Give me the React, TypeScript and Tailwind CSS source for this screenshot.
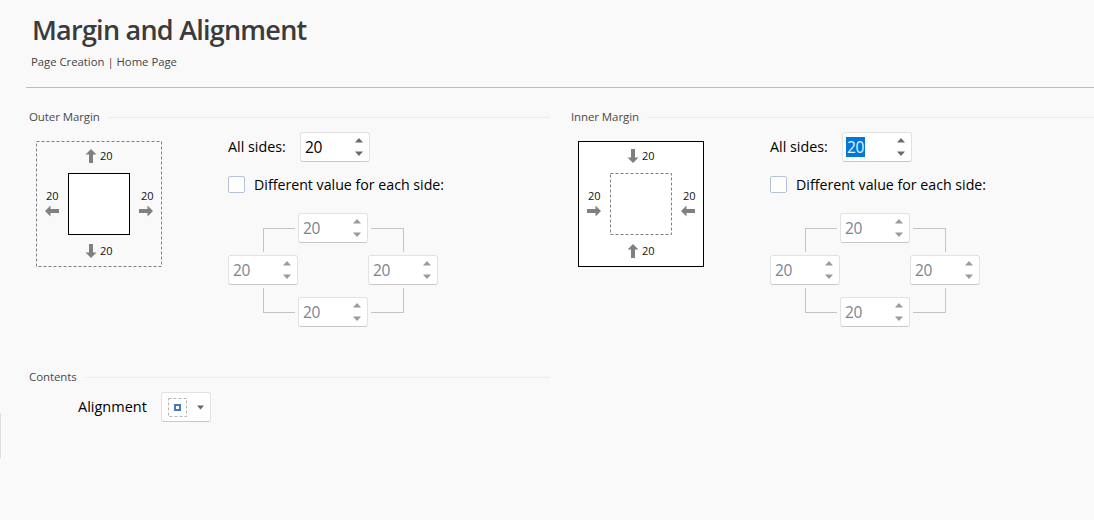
import React from 'react';

const font = { fontFamily: '"Open Sans", sans-serif' };

const Spinner = ({ disabled = false, selected = false }: { disabled?: boolean; selected?: boolean }) => (
  <div
    className={`relative w-[70px] h-[30px] bg-white rounded-[3px] border border-[#e2e2e2] border-b-[#c8c8c8] ${selected ? 'border-b-[#0078a8]' : ''}`}
  >
    <span
      className={`absolute left-[3px] top-[4px] h-[20px] px-[1px] text-[15.5px] leading-[20px] tracking-[-0.3px] ${
        selected ? 'bg-[#0078d7] text-[#e8f2fb]' : disabled ? 'text-[#7a8591]' : 'text-black'
      }`}
    >
      20
    </span>
    <svg className="absolute right-[6px] top-[5px]" width="8" height="18" viewBox="0 0 8 18">
      <path d="M4 0 L8 4.5 H0 Z" fill={disabled ? '#9a9a9a' : '#6a6a6a'} />
      <path d="M4 18 L8 13.5 H0 Z" fill={disabled ? '#9a9a9a' : '#6a6a6a'} />
    </svg>
  </div>
);

const Section = ({ label, className }: { label: string; className: string }) => (
  <div className={`flex items-center h-[20px] pl-[3px] ${className}`}>
    <span className="text-[11.5px] text-[#4a4a4a] tracking-[-0.1px] whitespace-nowrap">{label}</span>
    <div className="flex-1 ml-[8px] border-t border-[#ececec]" />
  </div>
);

const Arrow = ({ x, y, dir }: { x: number; y: number; dir: 'up' | 'down' | 'left' | 'right' }) => {
  const rot = { up: 0, right: 90, down: 180, left: 270 }[dir];
  return (
    <path
      d="M0 -7 L5.5 -1.5 H2 V7 H-2 V-1.5 H-5.5 Z"
      fill="#808080"
      transform={`translate(${x} ${y}) rotate(${rot})`}
    />
  );
};

const Num = ({ x, y }: { x: number; y: number }) => (
  <text x={x} y={y} fontSize="11" fill="#111" fontFamily="Open Sans, sans-serif">
    20
  </text>
);

const Diagram = ({ inner }: { inner?: boolean }) => (
  <svg width="127" height="127" viewBox="0 0 127 127" className="block shrink-0">
    <rect
      x="0.5"
      y="0.5"
      width="125"
      height="125"
      fill={inner ? '#ffffff' : 'none'}
      stroke={inner ? '#000000' : '#808080'}
      strokeDasharray={inner ? undefined : '3 2'}
    />
    <rect
      x="32.5"
      y="32.5"
      width="61"
      height="61"
      fill="#ffffff"
      stroke={inner ? '#808080' : '#000000'}
      strokeDasharray={inner ? '3 2' : undefined}
    />
    <Arrow x={55} y={15} dir={inner ? 'down' : 'up'} />
    <Arrow x={55} y={110} dir={inner ? 'up' : 'down'} />
    <Arrow x={16} y={70} dir={inner ? 'right' : 'left'} />
    <Arrow x={110} y={70} dir={inner ? 'left' : 'right'} />
    <Num x={64} y={19} />
    <Num x={64} y={114} />
    <Num x={10} y={59} />
    <Num x={105} y={59} />
  </svg>
);

const Controls = ({ selected }: { selected?: boolean }) => (
  <div>
    <div className="flex items-center h-[30px]">
      <span className="w-[72px] text-[14.3px] text-black">All sides:</span>
      <Spinner selected={selected} />
    </div>
    <div className="flex items-center h-[17px] mt-[14px]">
      <div className="w-[17px] h-[17px] bg-white rounded-[2px] border border-[#b4c2da]" />
      <span className="ml-[9px] text-[14.2px] text-black whitespace-nowrap">Different value for each side:</span>
    </div>
    <div className="grid grid-cols-[70px_70px_70px] grid-rows-[30px_12px_30px_12px_30px] mt-[20px]">
      <div className="col-start-1 row-start-1 row-span-2 mt-[15px] mb-[3px] ml-[35px] mr-[3px] border-l border-t border-[#c4c4c4]" />
      <div className="col-start-2 row-start-1">
        <Spinner disabled />
      </div>
      <div className="col-start-3 row-start-1 row-span-2 mt-[15px] mb-[3px] ml-[3px] mr-[34px] border-r border-t border-[#c4c4c4]" />
      <div className="col-start-1 row-start-3">
        <Spinner disabled />
      </div>
      <div className="col-start-3 row-start-3">
        <Spinner disabled />
      </div>
      <div className="col-start-1 row-start-4 row-span-2 mt-[3px] mb-[14px] ml-[35px] mr-[3px] border-l border-b border-[#c4c4c4]" />
      <div className="col-start-2 row-start-5">
        <Spinner disabled />
      </div>
      <div className="col-start-3 row-start-4 row-span-2 mt-[3px] mb-[14px] ml-[3px] mr-[34px] border-r border-b border-[#c4c4c4]" />
    </div>
  </div>
);

export default function App() {
  return (
    <div className="relative w-[1094px] h-[520px] overflow-hidden bg-[#f9f9f9]" style={font}>
      <div className="absolute left-0 top-[413px] h-[45px] border-l border-[#dedede]" />

      <div className="h-[88px] ml-[26px] border-b border-[#bdbdbd] pt-[12px]">
        <h1 className="ml-[6px] text-[27px] leading-[36px] font-semibold text-[#3b3b3b] tracking-[-0.76px]">
          Margin and Alignment
        </h1>
        <p className="ml-[5px] mt-[5px] text-[11.3px] leading-[18px] text-[#444444]">
          Page Creation | Home Page
        </p>
      </div>

      <div className="flex ml-[26px] mt-[19px]">
        <div className="w-[542px]">
          <Section label="Outer Margin" className="mr-[18px]" />
          <div className="flex mt-[5px]">
            <div className="ml-[10px] mr-[65px] mt-[9px]">
              <Diagram />
            </div>
            <Controls />
          </div>
          <Section label="Contents" className="mr-[18px] mt-[40px]" />
          <div className="flex items-center mt-[5px] ml-[52px]">
            <span className="w-[83px] text-[14.5px] text-black">Alignment</span>
            <div className="flex items-center w-[50px] h-[30px] bg-white rounded-[3px] border border-[#e2e2e2] border-b-[#c8c8c8]">
              <svg width="48" height="28" viewBox="0 0 48 28" className="block">
                <rect x="6.5" y="5.5" width="18" height="18" fill="none" stroke="#b5b5b5" strokeDasharray="3 2" />
                <rect x="13" y="12" width="5" height="5" fill="#ffffff" stroke="#4a7ab5" strokeWidth="2" />
                <path d="M35 12.5 H42 L38.5 16.5 Z" fill="#666666" />
              </svg>
            </div>
          </div>
        </div>
        <div className="flex-1">
          <Section label="Inner Margin" />
          <div className="flex mt-[5px]">
            <div className="ml-[10px] mr-[65px] mt-[9px]">
              <Diagram inner />
            </div>
            <Controls selected />
          </div>
        </div>
      </div>
    </div>
  );
}
